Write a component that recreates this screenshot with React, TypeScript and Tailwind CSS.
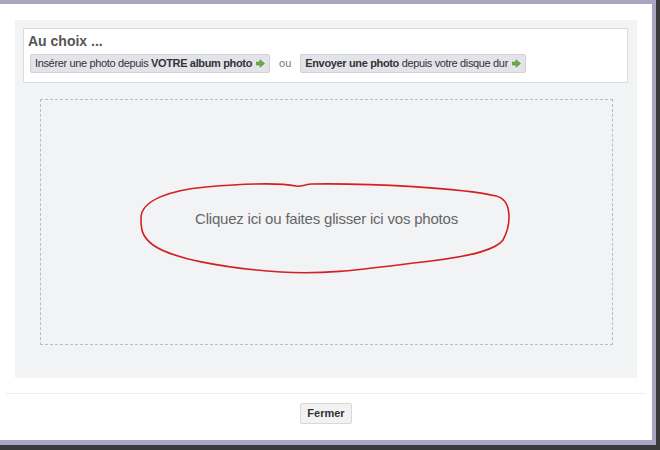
const FONT = { fontFamily: "'Liberation Sans', Arial, sans-serif" };

function GreenArrow() {
  return (
    <svg width="9" height="9" viewBox="0 0 9 9" className="ml-[4px] inline-block">
      <path d="M0.5 3 H4 V0.8 L8.5 4.5 L4 8.2 V6 H0.5 Z" fill="#6cae3a" stroke="#4e8a26" strokeWidth="0.6" />
    </svg>
  );
}

function ChoiceButton({ children }: { children: React.ReactNode }) {
  return (
    <button
      type="button"
      className="flex h-[19px] items-center rounded-[2px] border border-[#cfd0d8] bg-[#e3e4ea] px-[4px] text-[11px] tracking-[-0.35px] text-[#333]"
    >
      {children}
      <GreenArrow />
    </button>
  );
}

export default function App() {
  return (
    <div className="h-[450px] w-[660px] overflow-hidden bg-[#3a3a3a]" style={FONT}>
      <div className="flex h-[445px] w-[656px] flex-col border-t-4 border-r-4 border-b-[5px] border-[#aaa6c1] bg-white">
        {/* content panel */}
        <div className="ml-[15px] mt-[16px] flex h-[358px] w-[622px] flex-col bg-[#f2f3f5] pl-[8px] pt-[8px]">
          <div className="h-[55px] w-[605px] border border-[#dcdcdc] bg-white pl-[4px] pt-[3px]">
            <div className="text-[14px] font-bold leading-[18px] text-[#555]">Au choix ...</div>
            <div className="mt-[4px] flex items-center pl-[2px]">
              <ChoiceButton>
                Insérer une photo depuis&nbsp;<b>VOTRE album photo</b>
              </ChoiceButton>
              <span className="mx-[9px] text-[11px] text-[#777]">ou</span>
              <ChoiceButton>
                <b>Envoyer une photo</b>&nbsp;depuis votre disque dur
              </ChoiceButton>
            </div>
          </div>

          {/* drop zone */}
          <div className="relative ml-[17px] mt-[16px] flex h-[246px] w-[573px] items-center justify-center border border-dashed border-[#bcbcbc]">
            <span className="pb-[6px] text-[15px] tracking-[-0.2px] text-[#666]">
              Cliquez ici ou faites glisser ici vos photos
            </span>
            <svg className="pointer-events-none absolute left-0 top-0" width="573" height="246" viewBox="0 0 573 246">
              <path
                d="M100,118 C100,100 130,90 165,87 C200,84 235,82 255,86 C259,87 262,85 270,84 C330,83 420,88 455,96 C472,100 470,125 462,140 C455,150 430,156 390,161 C330,168 290,175 240,172 C180,168 130,158 112,145 C100,136 100,128 100,118 Z"
                fill="none"
                stroke="#d42020"
                strokeWidth="1.6"
              />
            </svg>
          </div>
        </div>

        {/* footer */}
        <div className="ml-[6px] mt-[15px] h-px w-[639px] bg-[#ececec]" />
        <div className="mt-[9px] flex justify-center">
          <button
            type="button"
            className="h-[21px] w-[52px] rounded-[2px] border border-[#d8d8d8] bg-[#f2f2f2] text-[11px] font-bold text-[#333]"
          >
            Fermer
          </button>
        </div>
      </div>
    </div>
  );
}
